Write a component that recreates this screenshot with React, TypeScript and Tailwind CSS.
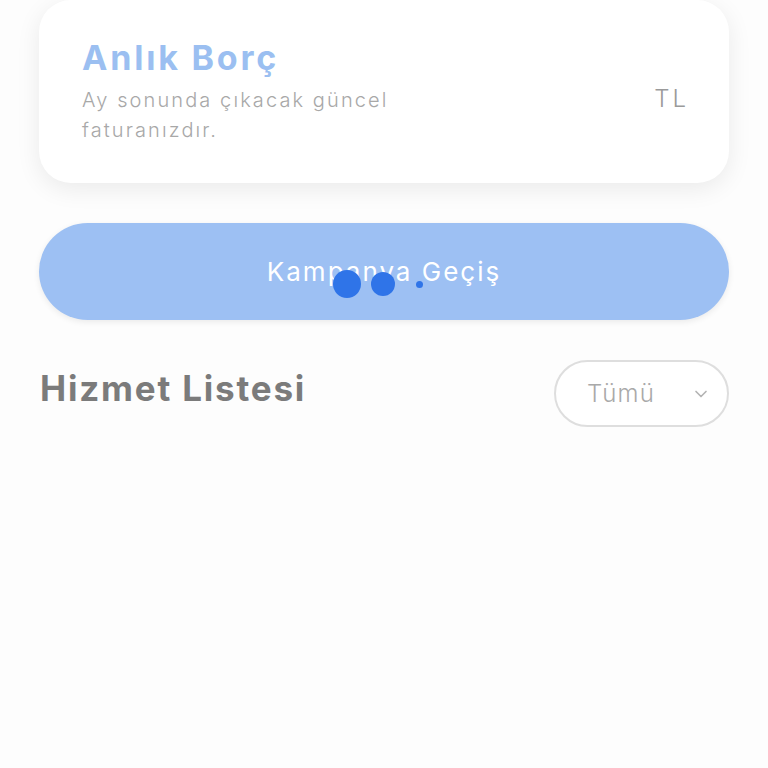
import { ChevronDown } from "lucide-react"

// ─── DebtCard ────────────────────────────────────────────────────────────────

function DebtCard() {
  return (
    <div className="flex h-[183px] items-center justify-between rounded-[32px] bg-white pl-[43px] pr-[40px] shadow-[0_6px_24px_rgba(0,0,0,0.08)]">
      <div className="flex flex-col">
        <h2 className="text-[34px] font-bold leading-[40px] tracking-[2.8px] text-[#9bbff1]">Anlık Borç</h2>
        <p className="mt-[7px] w-[360px] text-[20px] font-light leading-[30px] tracking-[2.1px] text-[#a8a8a8]">
          Ay sonunda çıkacak güncel faturanızdır.
        </p>
      </div>
      <span className="mt-[14px] text-[24px] font-light tracking-[3px] text-[#9a9a9a]">TL</span>
    </div>
  )
}

// ─── LoadingDots ─────────────────────────────────────────────────────────────

function LoadingDots() {
  return (
    <div className="pointer-events-none absolute left-[294px] top-[47px] flex items-center">
      <span className="h-[28px] w-[28px] rounded-full bg-[#2f74e8]" />
      <span className="ml-[10px] h-[24px] w-[24px] rounded-full bg-[#2f74e8]" />
      <span className="ml-[21px] h-[7px] w-[7px] rounded-full bg-[#2f74e8]" />
    </div>
  )
}

// ─── App ─────────────────────────────────────────────────────────────────────

export default function App() {
  return (
    <div
      className="min-h-[768px] bg-[#fdfdfd] px-[39px] pb-10"
      style={{ fontFamily: "Inter, 'Noto Sans', sans-serif" }}
    >
      <DebtCard />

      <button className="relative mt-[40px] flex h-[97px] w-full items-center justify-center rounded-full bg-[#9dc0f3] shadow-[0_2px_6px_rgba(0,0,0,0.08)]">
        <span className="text-[26px] font-normal tracking-[2px] text-white">Kampanya Geçiş</span>
        <LoadingDots />
      </button>

      <div className="mt-[40px] flex items-center justify-between">
        <h3 className="mb-[10px] pl-px text-[35px] font-bold tracking-[1.8px] text-[#7b7b7b]">Hizmet Listesi</h3>
        <button className="flex h-[67px] w-[175px] items-center justify-between rounded-full border-2 border-[#dedede] bg-white pl-[31px] pr-[16px]">
          <span className="text-[24px] font-light tracking-[1.2px] text-[#a9a9a9]">Tümü</span>
          <ChevronDown size={20} strokeWidth={2} className="text-[#b3b3b3]" />
        </button>
      </div>
    </div>
  )
}
